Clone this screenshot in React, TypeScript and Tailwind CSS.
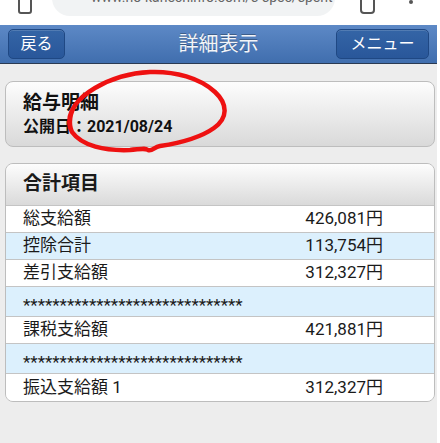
import React from "react";

const rows = [
  { label: "総支給額", value: "426,081円", blue: false },
  { label: "控除合計", value: "113,754円", blue: true },
  { label: "差引支給額", value: "312,327円", blue: false },
  { label: "******************************", value: "", blue: true, stars: true },
  { label: "課税支給額", value: "421,881円", blue: false },
  { label: "******************************", value: "", blue: true, stars: true },
  { label: "振込支給額 1", value: "312,327円", blue: false },
];

const App = () => {
  return (
    <div
      className="relative w-[440px] h-[443px] overflow-hidden bg-white"
      style={{ fontFamily: '"Roboto", "Noto Sans CJK JP", sans-serif' }}
    >
      {/* browser chrome, cut at top */}
      <div className="h-[25px] flex items-start overflow-hidden">
        <div className="ml-[18px] mt-[-6px] w-[14px] h-[20px] border-2 border-[#555] rounded-[3px]" />
        <div className="ml-[20px] mt-[-20px] w-[283px] h-[36px] rounded-full bg-[#f1f3f4] flex items-end pb-[20px] pl-[14px]">
          <div className="w-[11px] h-[8px] bg-[#555] rounded-[1px]" />
          <span className="ml-[14px] text-[14px] leading-[14px] text-[#666] mb-[-8px] whitespace-nowrap">
            www.no-kanechinfo.com/s-spec/spent
          </span>
        </div>
        <div className="ml-[25px] mt-[-6px] w-[15px] h-[20px] border-2 border-[#555] rounded-[4px]" />
        <div className="ml-[34px] mt-[0px] w-[4px] h-[4px] rounded-full bg-[#555]" />
      </div>

      <div className="w-[437px] bg-[#ededed] h-[418px]">
        {/* header */}
        <div className="h-[39px] bg-gradient-to-b from-[#5d89c6] to-[#406eae] border-b border-[#2a3a52] grid grid-cols-[1fr_auto_1fr] items-center px-[8px]">
          <div className="justify-self-start w-[57px] h-[30px] rounded-[5px] bg-gradient-to-b from-[#3465a6] to-[#29579a] border border-[#1f4884] shadow-[inset_0_1px_0_rgba(255,255,255,0.15)] flex items-center justify-center text-white text-[16px]">
            戻る
          </div>
          <div className="text-[20px] text-[#f2f4f8] [text-shadow:0_-1px_0_rgba(0,0,0,0.3)]">
            詳細表示
          </div>
          <div className="justify-self-end w-[93px] h-[30px] rounded-[5px] bg-gradient-to-b from-[#3465a6] to-[#29579a] border border-[#1f4884] shadow-[inset_0_1px_0_rgba(255,255,255,0.15)] flex items-center justify-center text-white text-[16px]">
            メニュー
          </div>
        </div>

        {/* summary card */}
        <div className="ml-[5px] mt-[17px] w-[430px] h-[66px] rounded-[8px] border border-[#bdbdbd] bg-gradient-to-b from-[#fdfdfd] to-[#d9d9d9] pl-[17px] pt-[8px] text-[#111]">
          <div className="text-[19px] font-bold leading-[26px]">給与明細</div>
          <div className="text-[16px] font-bold leading-[22px]">公開日：2021/08/24</div>
        </div>

        {/* totals card */}
        <div className="ml-[5px] mt-[16px] w-[430px] rounded-[8px] border border-[#bdbdbd] overflow-hidden text-[#1a1a1a]">
          <div className="h-[42px] bg-gradient-to-b from-[#fdfdfd] to-[#dadada] border-b border-[#c4c4c4] flex items-center pl-[17px] text-[19px] font-bold">
            合計項目
          </div>
          {rows.map((r, i) => (
            <div
              key={i}
              className={`flex justify-between pl-[17px] pr-[51px] text-[17px] ${
                r.blue ? "bg-[#dcf0fd]" : "bg-white"
              } ${i < rows.length - 1 ? "border-b border-[#c4c4c4]" : ""} ${
                r.stars ? "h-[30px] items-start pt-[8px]" : "h-[27px] items-center"
              }`}
            >
              <span className={r.stars ? "leading-[20px]" : ""}>{r.label}</span>
              <span>{r.value}</span>
            </div>
          ))}
        </div>
      </div>

      {/* red hand-drawn annotation */}
      <svg className="absolute left-0 top-0 pointer-events-none" width="440" height="443">
        <path
          d="M70 128 C66 112 78 98 95 88 C112 78 130 73 150 72 C175 71 200 78 215 92 C228 104 228 118 214 128 C200 138 180 143 160 146 C154 147 152 152 148 150 C145 148 142 149 130 150 C105 151 82 146 72 132 C68 124 70 112 76 104"
          fill="none"
          stroke="#ee1111"
          strokeWidth="4.5"
          strokeLinecap="round"
          strokeLinejoin="round"
        />
      </svg>
    </div>
  );
};

export default App;
